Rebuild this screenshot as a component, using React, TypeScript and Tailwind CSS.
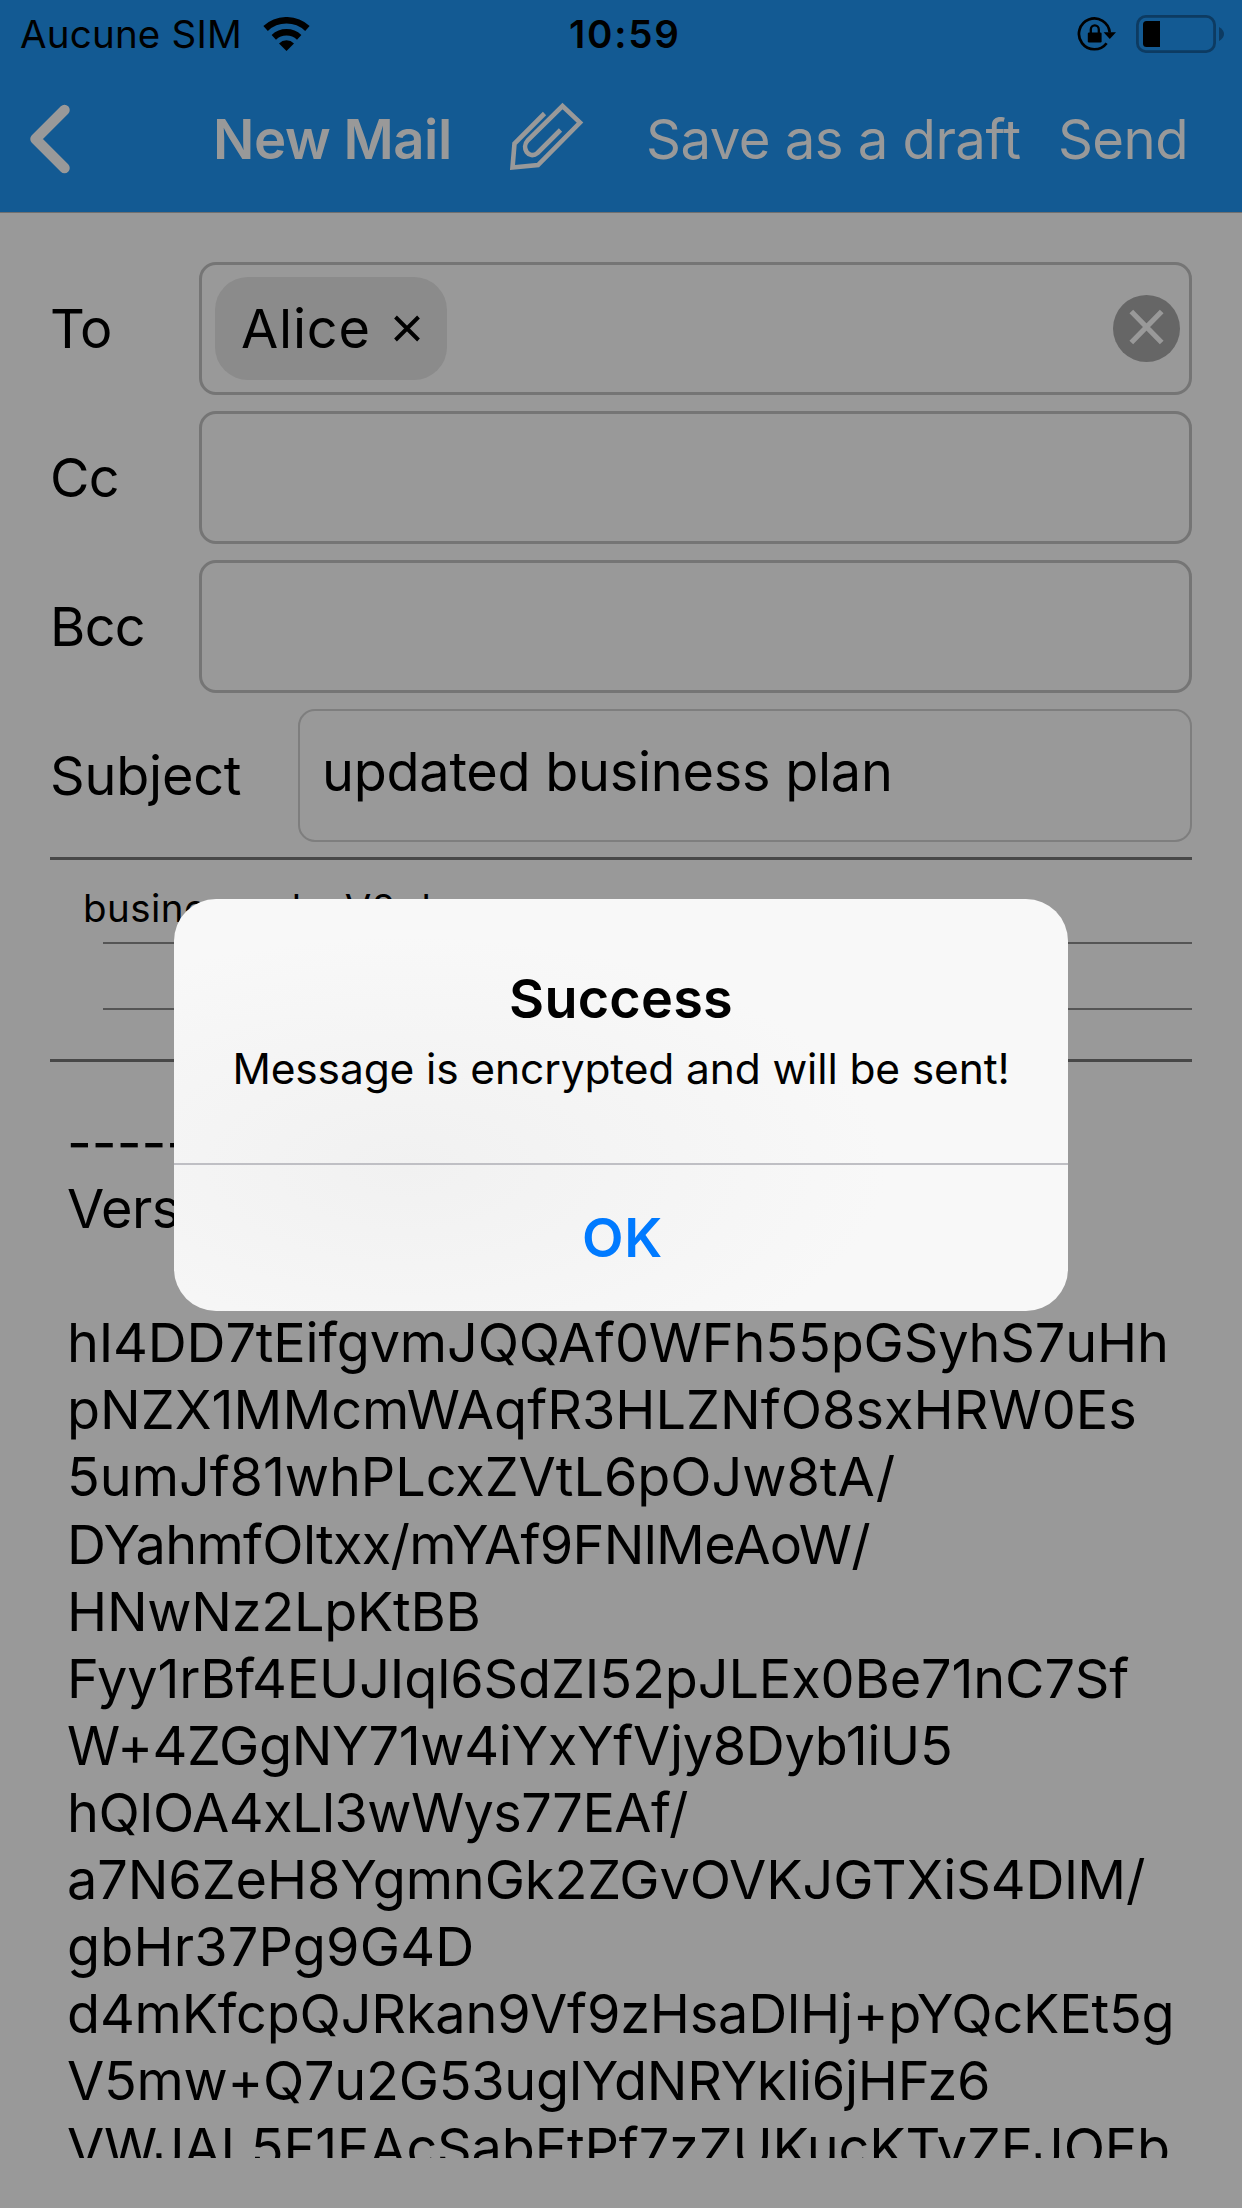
import type { ReactNode } from "react";

const bodyLines: { text: string; tracking: string }[] = [
  { text: "-----BEGIN PGP MESSAGE-----", tracking: "tracking-[0px] translate-y-[4px]" },
  { text: "Version: BCPG v1.58", tracking: "tracking-[-0.5px]" },
  { text: "\u00a0", tracking: "tracking-[0px]" },
  { text: "hI4DD7tEifgvmJQQAf0WFh55pGSyhS7uHh", tracking: "tracking-[-0.17px]" },
  { text: "pNZX1MMcmWAqfR3HLZNfO8sxHRW0Es", tracking: "tracking-[0.02px]" },
  { text: "5umJf81whPLcxZVtL6pOJw8tA/", tracking: "tracking-[-0.06px]" },
  { text: "DYahmfOltxx/mYAf9FNlMeAoW/", tracking: "tracking-[-0.7px]" },
  { text: "HNwNz2LpKtBB", tracking: "tracking-[-0.25px]" },
  { text: "Fyy1rBf4EUJIql6SdZI52pJLEx0Be71nC7Sf", tracking: "tracking-[-0.12px]" },
  { text: "W+4ZGgNY71w4iYxYfVjy8Dyb1iU5", tracking: "tracking-[-0.32px]" },
  { text: "hQIOA4xLl3wWys77EAf/", tracking: "tracking-[-0.55px]" },
  { text: "a7N6ZeH8YgmnGk2ZGvOVKJGTXiS4DlM/", tracking: "tracking-[-0.1px]" },
  { text: "gbHr37Pg9G4D", tracking: "tracking-[0.15px]" },
  { text: "d4mKfcpQJRkan9Vf9zHsaDlHj+pYQcKEt5g", tracking: "tracking-[-0.18px]" },
  { text: "V5mw+Q7u2G53uglYdNRYkli6jHFz6", tracking: "tracking-[-0.26px]" },
  { text: "VWJAL5F1EAcSabEtPf7zZUKucKTvZEJOEb", tracking: "tracking-[-0.16px]" },
];

function WifiIcon() {
  return (
    <svg width="47" height="34" viewBox="0 0 47 34" fill="none" stroke="#000">
      <path d="M2.6 11.5A30.7 30.7 0 0 1 44.4 11.5" strokeWidth="6.6" />
      <path d="M10.8 20.3A18.6 18.6 0 0 1 36.2 20.3" strokeWidth="6.4" />
      <path d="M23.5 34L16 26.4A10.8 10.8 0 0 1 31 26.4Z" fill="#000" stroke="none" />
    </svg>
  );
}

function RotationLockIcon() {
  return (
    <svg width="40" height="36" viewBox="17 10 40 36" fill="none" stroke="#000">
      <path d="M49.7 26.5A15.4 15.4 0 1 0 46.6 37.2" strokeWidth="2.7" />
      <path d="M43.6 26.2H56L49.8 33Z" fill="#000" stroke="none" />
      <rect x="27.8" y="26.6" width="13.8" height="9.8" rx="1.2" fill="#000" stroke="none" />
      <path d="M30.8 27V23.6A4 4.2 0 0 1 38.8 23.6V27" strokeWidth="2.3" />
    </svg>
  );
}

function BatteryIcon() {
  return (
    <svg width="90" height="38" viewBox="0 0 90 38" fill="none">
      <rect x="1.4" y="1.4" width="77.2" height="35.2" rx="8.5" stroke="#0d3b62" strokeWidth="2.8" />
      <path d="M10.5 6H24V32H10.5Q7 32 7 28.5V9.5Q7 6 10.5 6Z" fill="#000" />
      <path d="M83 12Q88 15 88 19T83 26Z" fill="#0d3b62" />
    </svg>
  );
}

function PaperclipIcon() {
  return (
    <svg className="-ml-px" width="80" height="76" viewBox="8 12 80 76" fill="none" stroke="#999" strokeWidth="4.6">
      <path d="M45.5 24.5L15.5 54.5L13.5 78.5L39 76L81 33.5L63.5 17L29 51C21.5 59 30 71 38.5 64L61.5 41" />
    </svg>
  );
}

function StatusBar() {
  return (
    <div className="relative flex h-[68px] items-center justify-between pl-5 pr-4 text-[38.5px] leading-[48px] text-black">
      <div className="flex items-center">
        <span className="w-[243px] tracking-[0.2px]">Aucune SIM</span>
        <WifiIcon />
      </div>
      <span className="absolute left-[569px] font-semibold tracking-[1.8px]">10:59</span>
      <div className="flex items-center gap-[19px]">
        <RotationLockIcon />
        <BatteryIcon />
      </div>
    </div>
  );
}

function NavBar() {
  return (
    <div className="flex h-[142px] items-center text-[54.5px] leading-[66px] text-[#999]">
      <svg className="ml-7 shrink-0" width="48" height="76" viewBox="0 0 48 76" fill="none" stroke="#999" strokeWidth="10.5" strokeLinecap="round" strokeLinejoin="round">
        <path d="M36.5 9L7.500 38L36.5 67" />
      </svg>
      <span className="ml-[137px] w-[295px] shrink-0 whitespace-nowrap font-semibold tracking-[-0.45px]">New Mail</span>
      <PaperclipIcon />
      <span className="ml-[59px] w-[412px] shrink-0 whitespace-nowrap tracking-[-0.55px]">Save as a draft</span>
      <span className="tracking-[-0.6px]">Send</span>
    </div>
  );
}

function Field({ label, children }: { label: string; children?: ReactNode }) {
  return (
    <div className="flex h-[133px] items-center">
      <span className="w-[149px] tracking-[-0.7px]">{label}</span>
      <div className="flex h-full flex-1 items-center justify-between rounded-[17px] border-3 border-[#757575] pl-[13px] pr-[9px]">
        {children}
      </div>
    </div>
  );
}

function Recipient({ name }: { name: string }) {
  return (
    <div className="flex h-[103px] w-[232px] items-center rounded-[33px] bg-[#8b8b8b] pl-[26px]">
      <span className="w-[153px] tracking-[0.8px]">{name}</span>
      <svg width="26" height="28" viewBox="0 0 26 28" stroke="#000" strokeWidth="3.9">
        <path d="M1.5 2L24.5 25M24.5 2L1.5 25" />
      </svg>
    </div>
  );
}

function ClearButton() {
  return (
    <svg width="67" height="67" viewBox="0 0 67 67">
      <circle cx="33.5" cy="33.5" r="33.5" fill="#666" />
      <path d="M18.3 16.5L48.7 47.5M48.7 16.5L18.3 47.5" stroke="#999" strokeWidth="5.2" />
    </svg>
  );
}

function SuccessAlert() {
  return (
    <div className="absolute left-[174px] top-[899px] flex h-[412px] w-[894px] flex-col overflow-hidden rounded-[42px] bg-[#f8f8f8] bg-[radial-gradient(ellipse_480px_230px_at_26%_65%,#f1f1f1,#f8f8f8)] text-center text-black">
      <div className="h-[264px] pt-[66px]">
        <h2 className="text-[54px] font-semibold leading-[67px] tracking-[0.2px]">Success</h2>
        <p className="mt-[13px] whitespace-nowrap text-[42.5px] leading-[48px] tracking-[-0.13px]">Message is encrypted and will be sent!</p>
      </div>
      <button className="flex-1 border-t-2 border-[#bfbfc4] pl-[3px] text-[54px] font-semibold leading-[66px] tracking-[0.8px] text-[#007aff]">OK</button>
    </div>
  );
}

export default function App() {
  return (
    <div className="relative flex h-[2208px] w-[1242px] flex-col overflow-hidden bg-[#999] font-['Inter',sans-serif] text-black">
      <header className="h-[213px] shrink-0 border-b border-[#707070] bg-[#135a93]">
        <StatusBar />
        <NavBar />
      </header>

      <section className="mx-[50px] mt-[49px] flex flex-col gap-4 text-[54px] leading-[66px]">
        <Field label="To">
          <Recipient name="Alice" />
          <ClearButton />
        </Field>
        <Field label="Cc" />
        <Field label="Bcc" />
        <div className="flex h-[133px] items-center">
          <span className="w-[248px] tracking-[-0.2px]">Subject</span>
          <div className="flex h-full flex-1 items-center rounded-[17px] border-2 border-[#7e7e7e] pb-[7px] pl-[22px] tracking-[-0.25px]">
            updated business plan
          </div>
        </div>
      </section>

      <section className="mx-[50px] mt-[15px] h-[205px] shrink-0 border-y-[3px] border-[#484848]">
        <div className="h-[82px] pl-[33px] pt-[24px] text-[38.5px] leading-[48px] tracking-[0.45px]">business_planV2.docx</div>
        <div className="ml-[53px] h-[68px] border-y-2 border-[#555]" />
      </section>

      <section className="ml-[67px] mt-[46px] h-[1050px] shrink-0 overflow-hidden text-[54px] leading-[67.1px]">
        {bodyLines.map((line) => (
          <p key={line.text} className={`whitespace-nowrap ${line.tracking}`}>
            {line.text}
          </p>
        ))}
      </section>

      <SuccessAlert />
    </div>
  );
}
